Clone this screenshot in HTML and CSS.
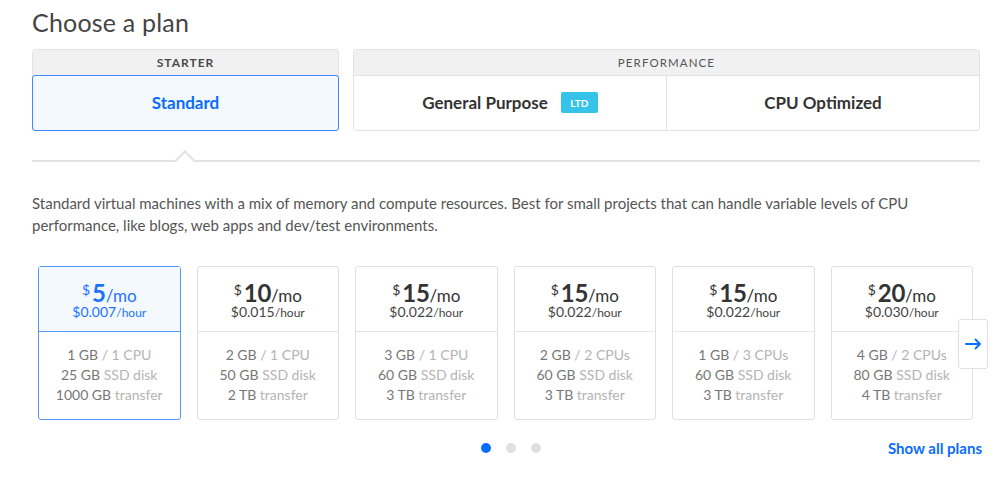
FILE: index.html
```html
<!DOCTYPE html>
<html>
<head>
<meta charset="utf-8">
<link rel="stylesheet" href="styles.css">
</head>
<body>
<div class="page">
  <h1 class="title">Choose a plan</h1>
  <div class="tabs">
    <div class="group starter">
      <div class="group-head">STARTER</div>
      <div class="group-body">
        <div class="tab active">Standard</div>
      </div>
    </div>
    <div class="group perf">
      <div class="group-head light">PERFORMANCE</div>
      <div class="group-body">
        <div class="tab">General Purpose <span class="badge">LTD</span></div>
        <div class="tab">CPU Optimized</div>
      </div>
    </div>
  </div>
  <div class="rule"><span class="caret"></span></div>
  <p class="desc">Standard virtual machines with a mix of memory and compute resources. Best for small projects that can handle variable levels of CPU performance, like blogs, web apps and dev/test environments.</p>

  <div class="carousel">
    <div class="cards">
      <div class="card selected">
        <div class="card-head">
          <div class="price"><span class="cur">$</span><span class="amt">5</span><span class="per">/mo</span></div>
          <div class="hour">$0.007<span class="hu">/hour</span></div>
        </div>
        <div class="card-body">
          <div>1 GB <span class="lt">/ 1 CPU</span></div>
          <div>25 GB <span class="lt">SSD disk</span></div>
          <div>1000 GB <span class="lt">transfer</span></div>
        </div>
      </div>
      <div class="card">
        <div class="card-head">
          <div class="price"><span class="cur">$</span><span class="amt">10</span><span class="per">/mo</span></div>
          <div class="hour">$0.015<span class="hu">/hour</span></div>
        </div>
        <div class="card-body">
          <div>2 GB <span class="lt">/ 1 CPU</span></div>
          <div>50 GB <span class="lt">SSD disk</span></div>
          <div>2 TB <span class="lt">transfer</span></div>
        </div>
      </div>
      <div class="card">
        <div class="card-head">
          <div class="price"><span class="cur">$</span><span class="amt">15</span><span class="per">/mo</span></div>
          <div class="hour">$0.022<span class="hu">/hour</span></div>
        </div>
        <div class="card-body">
          <div>3 GB <span class="lt">/ 1 CPU</span></div>
          <div>60 GB <span class="lt">SSD disk</span></div>
          <div>3 TB <span class="lt">transfer</span></div>
        </div>
      </div>
      <div class="card">
        <div class="card-head">
          <div class="price"><span class="cur">$</span><span class="amt">15</span><span class="per">/mo</span></div>
          <div class="hour">$0.022<span class="hu">/hour</span></div>
        </div>
        <div class="card-body">
          <div>2 GB <span class="lt">/ 2 CPUs</span></div>
          <div>60 GB <span class="lt">SSD disk</span></div>
          <div>3 TB <span class="lt">transfer</span></div>
        </div>
      </div>
      <div class="card">
        <div class="card-head">
          <div class="price"><span class="cur">$</span><span class="amt">15</span><span class="per">/mo</span></div>
          <div class="hour">$0.022<span class="hu">/hour</span></div>
        </div>
        <div class="card-body">
          <div>1 GB <span class="lt">/ 3 CPUs</span></div>
          <div>60 GB <span class="lt">SSD disk</span></div>
          <div>3 TB <span class="lt">transfer</span></div>
        </div>
      </div>
      <div class="card">
        <div class="card-head">
          <div class="price"><span class="cur">$</span><span class="amt">20</span><span class="per">/mo</span></div>
          <div class="hour">$0.030<span class="hu">/hour</span></div>
        </div>
        <div class="card-body">
          <div>4 GB <span class="lt">/ 2 CPUs</span></div>
          <div>80 GB <span class="lt">SSD disk</span></div>
          <div>4 TB <span class="lt">transfer</span></div>
        </div>
      </div>
    </div>
    <button class="next" aria-label="Next">
      <svg width="17" height="12" viewBox="0 0 17 12"><path d="M1 6 H15 M10.5 1.5 L15 6 L10.5 10.5" fill="none" stroke="#0a6cff" stroke-width="1.8" stroke-linecap="round" stroke-linejoin="round"/></svg>
    </button>
  </div>

  <div class="footer">
    <div class="spacer"></div>
    <div class="dots"><span class="dot on"></span><span class="dot"></span><span class="dot"></span></div>
    <div class="more"><a href="#">Show all plans</a></div>
  </div>
</div>
</body>
</html>
```
FILE: styles.css
```css
* { box-sizing: border-box; }
html, body { margin: 0; padding: 0; background: #fff; }
body {
  font-family: Lato, "Open Sans", sans-serif;
  color: #444;
  width: 1000px;
  height: 484px;
  overflow: hidden;
}
.page { padding: 5px 20px 0 32px; }
.title {
  margin: 0;
  font-size: 25px;
  line-height: 34px;
  font-weight: 400;
  color: #444;
  letter-spacing: 0.2px;
}
.tabs {
  display: flex;
  gap: 14px;
  margin-top: 10px;
  width: 948px;
}
.group {
  border: 1px solid #e3e3e3;
  border-radius: 3px;
  display: flex;
  flex-direction: column;
}
.starter { width: 307px; }
.perf { flex: 1; }
.group-head {
  height: 26px;
  background: #f1f1f1;
  border-bottom: 1px solid #e3e3e3;
  border-radius: 3px 3px 0 0;
  display: flex;
  align-items: center;
  justify-content: center;
  font-size: 12px;
  font-weight: 700;
  letter-spacing: 1px;
  color: #4a4a4a;
}
.group-head.light { font-weight: 400; font-size: 11.5px; color: #555; letter-spacing: 1.1px; }
.group-body { display: flex; height: 54px; }
.tab {
  flex: 1;
  display: flex;
  align-items: center;
  justify-content: center;
  font-size: 17px;
  font-weight: 700;
  color: #333;
  padding-bottom: 1px;
}
.perf .tab + .tab { border-left: 1px solid #e3e3e3; }
.tab.active {
  color: #0a6cff;
  background: #f4f8ff;
  border: 1px solid #3f87ff;
  border-radius: 3px;
  margin: -1px;
}
.badge {
  display: inline-flex;
  align-items: center;
  justify-content: center;
  width: 37px;
  height: 21px;
  margin-left: 13px;
  background: #35c3ea;
  color: #fff;
  font-size: 10px;
  font-weight: 700;
  border-radius: 2px;
}
.rule {
  position: relative;
  width: 948px;
  height: 2px;
  background: #e2e2e2;
  margin-top: 29px;
}
.caret {
  position: absolute;
  left: 146px;
  top: -7px;
  width: 14px;
  height: 14px;
  background: #fff;
  border-top: 2px solid #e2e2e2;
  border-left: 2px solid #e2e2e2;
  transform: rotate(45deg);
  transform-origin: center;
}
.desc {
  margin: 30px 0 0;
  font-size: 15px;
  line-height: 22px;
  color: #555;
  width: 948px;
}
.carousel {
  position: relative;
  margin-top: 30px;
  padding-left: 6px;
}
.cards {
  display: grid;
  grid-template-columns: repeat(6, 142.5px);
  gap: 16px;
}
.card {
  height: 154px;
  border: 1px solid #e0e0e0;
  border-radius: 3px;
  display: flex;
  flex-direction: column;
  text-align: center;
  color: #444;
}
.card-head {
  height: 65px;
  border-bottom: 1px solid #e6e6e6;
  padding-top: 11px;
}
.price { line-height: 24px; height: 24px; color: #333; }
.cur { font-size: 14px; vertical-align: 7px; margin-right: 2px; }
.amt { font-size: 24px; font-weight: 700; letter-spacing: -0.3px; }
.per { font-size: 17px; }
.hour { font-size: 14px; line-height: 17px; margin-top: 1px; color: #444; }
.hu { font-size: 12px; }
.card-body {
  padding-top: 13px;
  font-size: 14px;
  line-height: 20px;
  color: #777;
}
.lt { color: #b4b4b4; }
.card.selected { border-color: #5795ff; }
.card.selected .card-head {
  background: #f4f8ff;
  border-bottom-color: #5795ff;
}
.card.selected .price,
.card.selected .hour { color: #1a73ff; }
.next {
  position: absolute;
  left: 926px;
  top: 53px;
  width: 30px;
  height: 50px;
  background: #fff;
  border: 1px solid #e0e0e0;
  border-radius: 3px;
  padding: 0;
  display: flex;
  align-items: center;
  justify-content: center;
}
.footer {
  display: grid;
  grid-template-columns: 1fr auto 1fr;
  align-items: center;
  margin-top: 18px;
  padding-left: 8px;
  width: 950px;
}
.dots { display: flex; gap: 15px; }
.dot { width: 10px; height: 10px; border-radius: 50%; background: #e0e0e0; }
.dot.on { background: #0a6cff; }
.more { text-align: right; }
.more a {
  color: #0a6cff;
  font-weight: 700;
  font-size: 15px;
  text-decoration: none;
}
```
